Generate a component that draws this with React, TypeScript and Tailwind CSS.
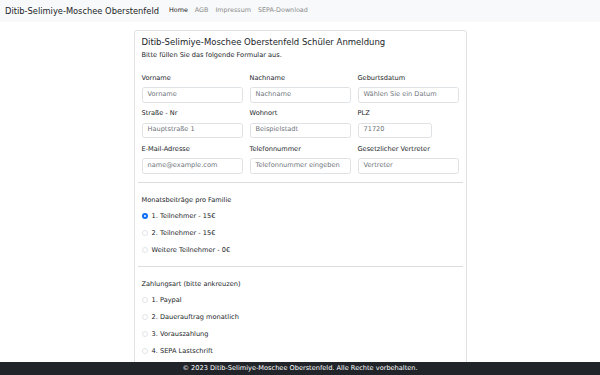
import React from 'react';

const fields = [
  [
    { label: 'Vorname', placeholder: 'Vorname', w: 'w-full' },
    { label: 'Nachname', placeholder: 'Nachname', w: 'w-full' },
    { label: 'Geburtsdatum', placeholder: 'Wählen Sie ein Datum', w: 'w-full' },
  ],
  [
    { label: 'Straße - Nr', placeholder: 'Hauptstraße 1', w: 'w-full' },
    { label: 'Wohnort', placeholder: 'Beispielstadt', w: 'w-full' },
    { label: 'PLZ', placeholder: '71720', w: 'w-[74px]' },
  ],
  [
    { label: 'E-Mail-Adresse', placeholder: 'name@example.com', w: 'w-full' },
    { label: 'Telefonnummer', placeholder: 'Telefonnummer eingeben', w: 'w-full' },
    { label: 'Gesetzlicher Vertreter', placeholder: 'Vertreter', w: 'w-full' },
  ],
];

const beitraege = ['1. Teilnehmer - 15€', '2. Teilnehmer - 15€', 'Weitere Teilnehmer - 0€'];
const zahlungsarten = ['1. Paypal', '2. Dauerauftrag monatlich', '3. Vorauszahlung', '4. SEPA Lastschrift'];

const Radio: React.FC<{ label: string; checked?: boolean }> = ({ label, checked }) => (
  <div className="flex items-center h-[10px] gap-[3.5px]">
    {checked ? (
      <span className="w-[6.6px] h-[6.6px] rounded-full bg-[#0d6efd] flex items-center justify-center">
        <span className="w-[2.6px] h-[2.6px] rounded-full bg-white" />
      </span>
    ) : (
      <span className="w-[6.6px] h-[6.6px] rounded-full border border-[#e2e5e8] bg-white" />
    )}
    <span className="leading-[10px]">{label}</span>
  </div>
);

export default function App() {
  return (
    <div className="min-h-screen bg-white text-[#212529] font-['DejaVu_Sans',sans-serif] text-[6.6px]">
      <nav className="h-[22px] bg-[#f8f9fa] flex items-center px-[5px]">
        <span className="text-[8.3px] mr-[10px]">Ditib-Selimiye-Moschee Oberstenfeld</span>
        <div className="flex items-center gap-[7px] text-[6.4px]">
          <span className="text-[#1a1a1a]">Home</span>
          <span className="text-[#8a8b8c]">AGB</span>
          <span className="text-[#8a8b8c]">Impressum</span>
          <span className="text-[#8a8b8c]">SEPA-Download</span>
        </div>
      </nav>

      <main className="pt-[8px]">
        <div className="w-[333px] mx-auto border border-[#dfe2e5] rounded-[3px] px-[7px] pt-[6px] pb-[20px]">
          <h1 className="text-[8.5px] leading-[10px]">Ditib-Selimiye-Moschee Oberstenfeld Schüler Anmeldung</h1>
          <p className="mt-[2.5px] leading-[10px]">Bitte füllen Sie das folgende Formular aus.</p>

          <div className="mt-[13px] flex flex-col gap-[5.5px]">
            {fields.map((row, i) => (
              <div key={i} className="grid grid-cols-3 gap-x-[7px]">
                {row.map((f) => (
                  <div key={f.label} className="flex flex-col">
                    <label className="leading-[10px] mb-[4.5px]">{f.label}</label>
                    <div
                      className={`${f.w} h-[15.5px] border border-[#dfe2e5] rounded-[2.5px] px-[5px] flex items-center text-[#6f757b] whitespace-nowrap overflow-hidden`}
                    >
                      {f.placeholder}
                    </div>
                  </div>
                ))}
              </div>
            ))}
          </div>

          <hr className="-mx-[4px] mt-[8px] border-0 border-t border-[#dcdde0]" />

          <p className="mt-[12px] leading-[10px]">Monatsbeiträge pro Familie</p>
          <div className="mt-[6.5px] flex flex-col gap-[7px]">
            {beitraege.map((b, i) => (
              <Radio key={b} label={b} checked={i === 0} />
            ))}
          </div>

          <hr className="-mx-[4px] mt-[10.5px] border-0 border-t border-[#dcdde0]" />

          <p className="mt-[12px] leading-[10px]">Zahlungsart (bitte ankreuzen)</p>
          <div className="mt-[6.5px] flex flex-col gap-[7px]">
            {zahlungsarten.map((z) => (
              <Radio key={z} label={z} />
            ))}
          </div>
        </div>
      </main>

      <footer className="fixed bottom-0 inset-x-0 h-[13px] bg-[#212529] text-white text-[6.6px] flex items-center justify-center">
        © 2023 Ditib-Selimiye-Moschee Oberstenfeld. Alle Rechte vorbehalten.
      </footer>
    </div>
  );
}
